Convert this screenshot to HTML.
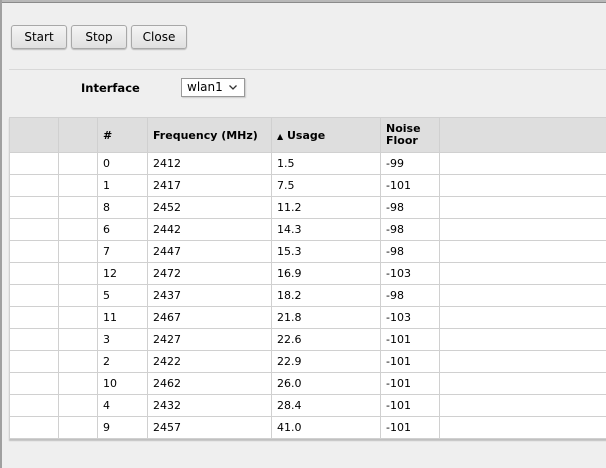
<!DOCTYPE html>
<html><head><style>
*{margin:0;padding:0;box-sizing:border-box}
body{width:606px;height:468px;overflow:hidden;background:#efefef;font-family:"DejaVu Sans","Liberation Sans",sans-serif;font-size:11px;color:#000;position:relative}
.top{position:absolute;left:0;top:0;width:606px;height:3px;background:#b8b8b8;border-bottom:1px solid #8a8a8a}
.left{position:absolute;left:0;top:0;width:2px;height:468px;background:#a0a0a0}
.btn{position:absolute;top:25px;height:24px;width:56px;border:1px solid #a8a8a8;border-radius:3px;background:linear-gradient(#f4f4f4,#e0e0e0);box-shadow:0 1px 1px #bbb;text-align:center;line-height:22px;font-size:12px;font-family:"DejaVu Sans",sans-serif}
.sep{position:absolute;left:9px;top:69px;width:597px;height:1px;background:#d8d8d8}
.lbl{position:absolute;left:81px;top:81px;font-weight:bold;font-size:11.5px}
.sel{position:absolute;left:181px;top:78px;width:64px;height:19px;background:#fff;border:1px solid #999;box-shadow:1px 1px 1px #ccc;padding-left:5px;line-height:17px;font-size:12px}
.sel svg{position:absolute;right:7px;top:6px}
table{position:absolute;left:9px;top:117px;border-collapse:collapse;width:610px;box-shadow:0 2px 1px #c0c0c0;background:#fff}
td,th{border:1px solid #d0d0d0;height:22px;padding:0 0 0 5px;text-align:left;font-size:11px;font-weight:normal}
th{background:#dedede;height:35px;font-weight:bold}
</style></head><body>
<div class="top"></div><div class="left"></div>
<div class="btn" style="left:11px">Start</div>
<div class="btn" style="left:71px">Stop</div>
<div class="btn" style="left:131px">Close</div>
<div class="sep"></div>
<div class="lbl">Interface</div>
<div class="sel">wlan1<svg width="8" height="5" viewBox="0 0 8 5"><path d="M0.5 0.5 L4 4 L7.5 0.5" fill="none" stroke="#333" stroke-width="1.3"/></svg></div>
<table>
<tr><th style="width:49px"></th><th style="width:39px"></th><th style="width:50px">#</th><th style="width:124px">Frequency (MHz)</th><th style="width:109px"><span style="font-size:8px">&#9650;</span> Usage</th><th style="width:59px;line-height:12px">Noise<br>Floor</th><th></th></tr>
<tr><td></td><td></td><td>0</td><td>2412</td><td>1.5</td><td>-99</td><td></td></tr>
<tr><td></td><td></td><td>1</td><td>2417</td><td>7.5</td><td>-101</td><td></td></tr>
<tr><td></td><td></td><td>8</td><td>2452</td><td>11.2</td><td>-98</td><td></td></tr>
<tr><td></td><td></td><td>6</td><td>2442</td><td>14.3</td><td>-98</td><td></td></tr>
<tr><td></td><td></td><td>7</td><td>2447</td><td>15.3</td><td>-98</td><td></td></tr>
<tr><td></td><td></td><td>12</td><td>2472</td><td>16.9</td><td>-103</td><td></td></tr>
<tr><td></td><td></td><td>5</td><td>2437</td><td>18.2</td><td>-98</td><td></td></tr>
<tr><td></td><td></td><td>11</td><td>2467</td><td>21.8</td><td>-103</td><td></td></tr>
<tr><td></td><td></td><td>3</td><td>2427</td><td>22.6</td><td>-101</td><td></td></tr>
<tr><td></td><td></td><td>2</td><td>2422</td><td>22.9</td><td>-101</td><td></td></tr>
<tr><td></td><td></td><td>10</td><td>2462</td><td>26.0</td><td>-101</td><td></td></tr>
<tr><td></td><td></td><td>4</td><td>2432</td><td>28.4</td><td>-101</td><td></td></tr>
<tr><td></td><td></td><td>9</td><td>2457</td><td>41.0</td><td>-101</td><td></td></tr>
</table>
</body></html>
